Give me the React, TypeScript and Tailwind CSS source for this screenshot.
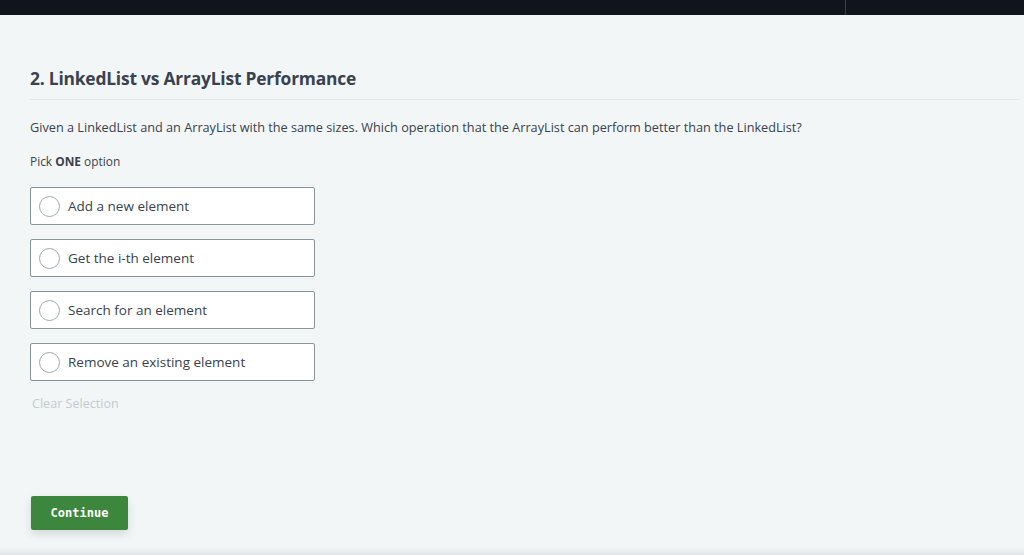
import React from "react";

const options = [
  "Add a new element",
  "Get the i-th element",
  "Search for an element",
  "Remove an existing element",
];

export default function App() {
  return (
    <div className="w-[1024px] h-[555px] overflow-hidden bg-[#f3f6f7] flex flex-col relative" style={{ fontFamily: '"Open Sans", "Noto Sans", sans-serif' }}>
      <div className="h-[15px] bg-[#10141c] flex shrink-0">
        <div className="w-[846px] border-r border-[#3a3f48]" />
      </div>
      <div className="pl-[30px] pr-[4px] pt-[52px]">
        <h1 className="text-[17.4px] font-bold text-[#39424e] leading-[22px] tracking-[-0.2px]">2. LinkedList vs ArrayList Performance</h1>
        <div className="mt-[10px] h-px bg-[#e3e7ea]" />
        <p className="mt-[19px] text-[12.7px] text-[#39424e] leading-[16px]">Given a LinkedList and an ArrayList with the same sizes. Which operation that the ArrayList can perform better than the LinkedList?</p>
        <p className="mt-[18px] text-[11.9px] text-[#39424e] leading-[16px]">Pick <span className="font-bold">ONE</span> option</p>
        <div className="mt-[18px] flex flex-col gap-[14px]">
          {options.map((o) => (
            <div key={o} className="w-[285px] h-[38px] bg-white border border-[#8a959b] rounded-[2px] flex items-center pl-[8px]">
              <span className="w-[21px] h-[21px] rounded-full border border-[#a0a9ae] bg-white shrink-0" />
              <span className="ml-[8px] text-[13.5px] text-[#39424e] pt-px">{o}</span>
            </div>
          ))}
        </div>
        <div className="mt-[15px] text-[12.6px] text-[#c3cbcf] leading-[16px] pl-[2px]">Clear Selection</div>
        <button className="mt-[84px] ml-[1px] w-[97px] h-[34px] bg-[#3c863d] rounded-[2px] text-white text-[12px] font-bold shadow-[0_4px_10px_rgba(0,0,0,0.12)]" style={{ fontFamily: '"DejaVu Sans Mono", monospace' }}>Continue</button>
      </div>
      <div className="absolute left-0 right-0 bottom-0 h-[8px] bg-gradient-to-b from-transparent to-[#e2e5e8]" />
    </div>
  );
}
